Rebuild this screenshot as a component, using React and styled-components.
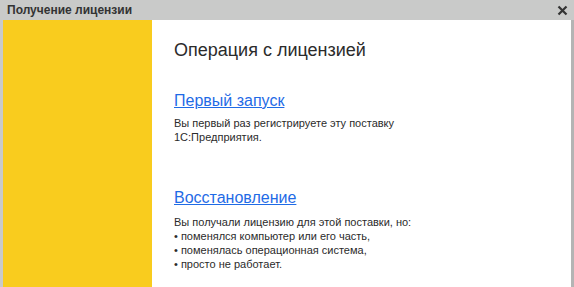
import React from "react";
import styled, { createGlobalStyle } from "styled-components";

const Global = createGlobalStyle`
  html, body { margin: 0; padding: 0; background: #fff; }
  body { font-family: "Liberation Sans", Arial, sans-serif; overflow: hidden; }
`;

const Window = styled.div`
  width: 574px;
  height: 287px;
  display: flex;
  flex-direction: column;
  background: #c9cac9;
`;

const TitleBar = styled.div`
  height: 20px;
  display: flex;
  align-items: center;
  justify-content: space-between;
  padding: 0 6px 0 7px;
  flex: none;
`;

const Title = styled.div`
  font-size: 12px;
  font-weight: bold;
  color: #333;
`;

const Close = styled.div`
  width: 12px;
  height: 12px;
  display: flex;
  align-items: center;
  justify-content: center;
`;

const Body = styled.div`
  flex: 1;
  display: flex;
  margin-left: 3px;
  border-right: 3px solid #b4b4b4;
  box-shadow: inset -1px 0 0 #d6d6d6;
`;

const Side = styled.div`
  width: 149px;
  background: #f9cc1e;
  flex: none;
`;

const Content = styled.div`
  flex: 1;
  background: #fff;
  padding: 19px 0 0 22px;
  color: #222;
`;

const Heading = styled.div`
  font-size: 18px;
  color: #2b2b2b;
  line-height: 22px;
  margin-bottom: 30px;
`;

const Link = styled.a`
  display: inline-block;
  font-size: 16px;
  line-height: 20px;
  color: #1f6be6;
  text-decoration: underline;
  cursor: pointer;
  margin-bottom: ${p => p.$mb ?? 5}px;
`;

const Para = styled.div`
  font-size: 11px;
  line-height: 14px;
  color: #2b2b2b;
  margin-bottom: ${p => p.$mb || 0}px;
`;

export default function App() {
  return (
    <>
      <Global />
      <Window>
        <TitleBar>
          <Title>Получение лицензии</Title>
          <Close>
            <svg width="11" height="11" viewBox="0 0 11 11">
              <path d="M1.5 1.5 L9.5 9.5 M9.5 1.5 L1.5 9.5" stroke="#333" strokeWidth="2.2" />
            </svg>
          </Close>
        </TitleBar>
        <Body>
          <Side />
          <Content>
            <Heading>Операция с лицензией</Heading>
            <Link>Первый запуск</Link>
            <Para $mb={44}>
              Вы первый раз регистрируете эту поставку
              <br />
              1С:Предприятия.
            </Para>
            <Link $mb={7}>Восстановление</Link>
            <Para>
              Вы получали лицензию для этой поставки, но:
              <br />• поменялся компьютер или его часть,
              <br />• поменялась операционная система,
              <br />• просто не работает.
            </Para>
          </Content>
        </Body>
      </Window>
    </>
  );
}
